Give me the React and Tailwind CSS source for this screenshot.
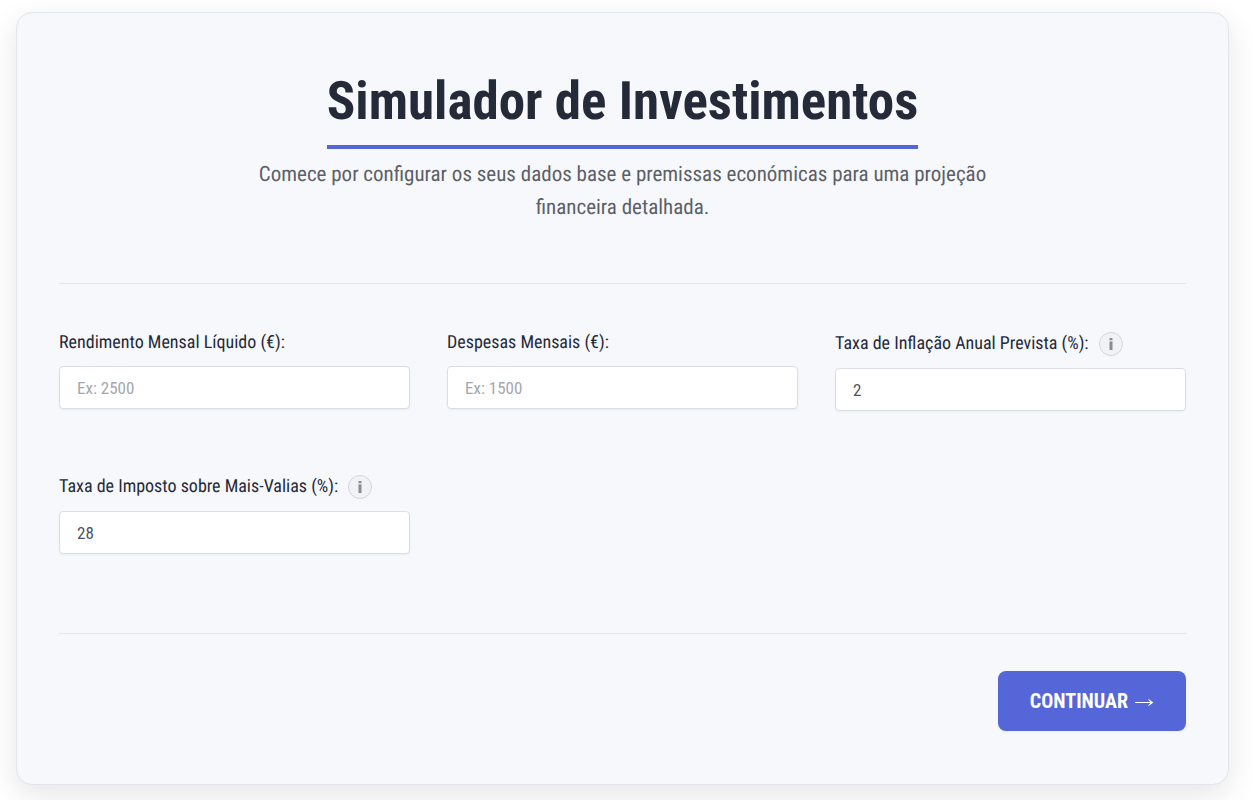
import React, { useState } from 'react';

// form fields
const fields = [
  { id: 'rendimento', label: 'Rendimento Mensal Líquido (€):', placeholder: 'Ex: 2500' },
  { id: 'despesas', label: 'Despesas Mensais (€):', placeholder: 'Ex: 1500' },
  { id: 'inflacao', label: 'Taxa de Inflação Anual Prevista (%):', info: true },
  { id: 'imposto', label: 'Taxa de Imposto sobre Mais-Valias (%):', info: true },
];

function Field({ field, value, onChange }) {
  return (
    <div>
      <div className="flex items-center gap-[10px] mb-3">
        <label htmlFor={field.id} className="text-[18px] leading-[22px] text-[#252a38]">
          {field.label}
        </label>
        {field.info && (
          <button
            type="button"
            aria-label="Info"
            className="flex h-6 w-6 items-center justify-center rounded-full border border-[#d3d6da] bg-[#f1f2f5] text-[#868c94]"
          >
            <svg width="4" height="12" viewBox="0 0 4 12" fill="currentColor" aria-hidden="true">
              <rect x="0.5" y="0" width="3" height="2.2" />
              <rect x="0.5" y="3.4" width="3" height="8.6" />
            </svg>
          </button>
        )}
      </div>
      <input
        id={field.id}
        type="text"
        inputMode="decimal"
        placeholder={field.placeholder}
        value={value}
        onChange={(e) => onChange(field.id, e.target.value)}
        className="block h-[43px] w-full rounded border border-[#dcdee4] bg-white px-[17px] text-[17px] text-[#4a5266] shadow-xs outline-none placeholder:text-[#a4a7ac] focus:border-[#5567d8]"
      />
    </div>
  );
}

function App() {

  const [ values, setValues ] = useState({
    rendimento: '',
    despesas: '',
    inflacao: '2',
    imposto: '28',
  });

  const update = (id, value) => {
    setValues({ ...values, [id]: value });
  }

  return (
    <main className="min-h-screen bg-white pt-3 pb-4 pl-4 pr-6 font-['Roboto_Condensed',Roboto,sans-serif] [text-rendering:geometricPrecision]">
      <form
        onSubmit={(e) => e.preventDefault()}
        className="rounded-2xl border border-[#e2e5ec] bg-[#f7f8fc] px-[42px] pt-[53px] pb-[53px] shadow-[0_10px_30px_rgba(0,0,0,0.1)]"
      >
        <header className="flex flex-col items-center border-b border-[#e3e5ec] pb-[58px] text-center">
          <h1 className="border-b-4 border-[#5567d8] pb-[9px] text-[53px] leading-[70px] font-bold text-[#252a38]">
            Simulador de Investimentos
          </h1>
          <p className="mt-[10px] max-w-[745px] text-[21px] leading-[33px] text-[#5c5f66]">
            Comece por configurar os seus dados base e premissas económicas para uma projeção financeira detalhada.
          </p>
        </header>

        <div className="grid grid-cols-3 gap-x-[37px] gap-y-16 pt-12 pb-[79px]">
          {fields.map((field) => (
            <Field key={field.id} field={field} value={values[field.id]} onChange={update} />
          ))}
        </div>

        <footer className="flex justify-end border-t border-[#e3e5ec] pt-[37px]">
          <button
            type="submit"
            className="flex h-[60px] items-center gap-[6px] rounded-lg bg-[#5567d8] px-8 text-[20px] font-bold text-white uppercase shadow-xs"
          >
            Continuar
            <svg width="20" height="14" viewBox="0 0 20 14" aria-hidden="true">
              <path d="M1 8.5H18" stroke="currentColor" strokeWidth="1" />
              <path d="M14.6 5 L19.4 8.5 L14.6 12 L14.2 11.4 L16.6 8.5 L14.2 5.6 Z" fill="currentColor" />
            </svg>
          </button>
        </footer>
      </form>
    </main>
  );
}

export default App;
